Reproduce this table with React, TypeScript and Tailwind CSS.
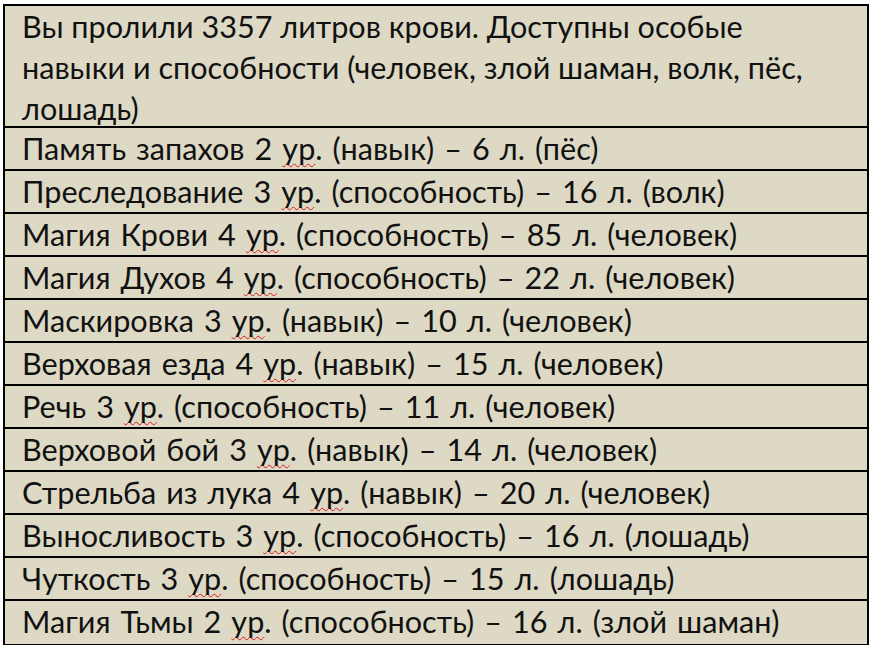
const rows: [string, string][] = [
  ['Память запахов 2 ', ' (навык) – 6 л. (пёс)'],
  ['Преследование 3 ', ' (способность) – 16 л. (волк)'],
  ['Магия Крови 4 ', ' (способность) – 85 л. (человек)'],
  ['Магия Духов 4 ', ' (способность) – 22 л. (человек)'],
  ['Маскировка 3 ', ' (навык) – 10 л. (человек)'],
  ['Верховая езда 4 ', ' (навык) – 15 л. (человек)'],
  ['Речь 3 ', ' (способность) – 11 л. (человек)'],
  ['Верховой бой 3 ', ' (навык) – 14 л. (человек)'],
  ['Стрельба из лука 4 ', ' (навык) – 20 л. (человек)'],
  ['Выносливость 3 ', ' (способность) – 16 л. (лошадь)'],
  ['Чуткость 3 ', ' (способность) – 15 л. (лошадь)'],
  ['Магия Тьмы 2 ', ' (способность) – 16 л. (злой шаман)'],
];

export default function App() {
  return (
    <div className="w-[872px] h-[645px] bg-white pt-[4px] pl-[3px]">
      <div
        className="w-[866px] border-2 border-black bg-[#ddd9c4] text-[30.6px] text-[#111]"
        style={{ fontFamily: 'Lato, "Noto Sans", sans-serif' }}
      >
        <div className="pl-[17px] pr-2 leading-[41px] h-[122px] border-b-2 border-black whitespace-nowrap">
          Вы пролили 3357 литров крови. Доступны особые
          <br />
          навыки и способности (человек, злой шаман, волк, пёс,
          <br />
          лошадь)
        </div>
        {rows.map(([a, b], i) => (
          <div
            key={i}
            className={`pl-[17px] h-[43px] leading-[41px] whitespace-nowrap [word-spacing:2.2px] ${
              i < rows.length - 1 ? 'border-b-2 border-black' : ''
            }`}
          >
            {a}
            <span className="underline decoration-wavy decoration-[#e01818] decoration-1 underline-offset-[3px] [text-decoration-skip-ink:none]">ур</span>.{b}
          </div>
        ))}
      </div>
    </div>
  );
}
